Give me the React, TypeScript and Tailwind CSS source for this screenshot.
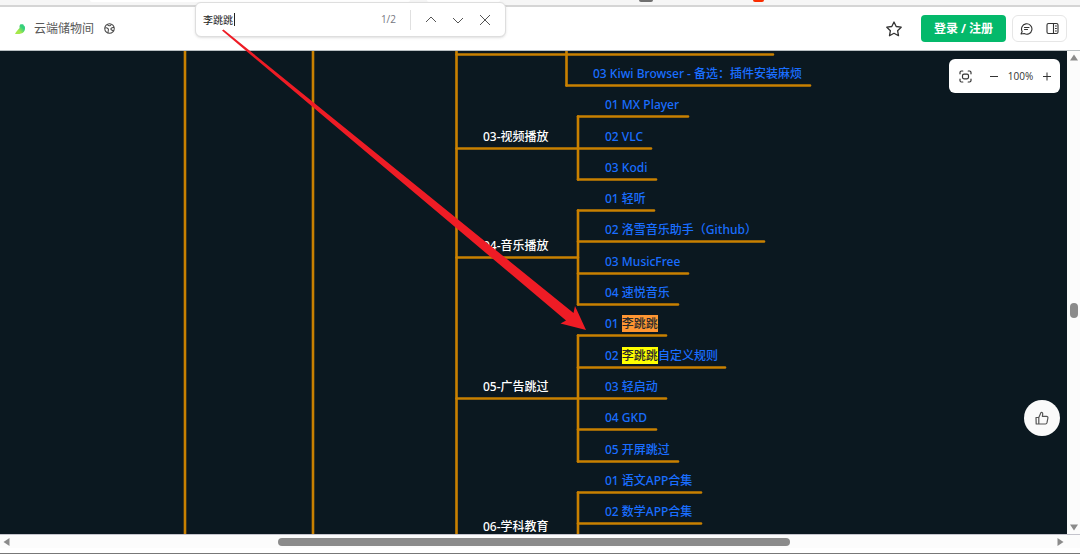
import { useState } from "react";

type Leaf = { x: number; row: number; end: number; text: string; hit?: string; hitClass?: string };
type Branch = { y: number; text: string };

const ROWS = [34, 65, 97, 128, 159, 190, 222, 253, 284, 316, 347, 378, 410, 441, 472];

const leaves: Leaf[] = [
  { x: 593, row: 0, end: 811, text: "03 Kiwi Browser - 备选：插件安装麻烦" },
  { x: 605, row: 1, end: 689, text: "01 MX Player" },
  { x: 605, row: 2, end: 652, text: "02 VLC" },
  { x: 605, row: 3, end: 657, text: "03 Kodi" },
  { x: 605, row: 4, end: 655, text: "01 轻听" },
  { x: 605, row: 5, end: 765, text: "02 洛雪音乐助手（Github）" },
  { x: 605, row: 6, end: 689, text: "03 MusicFree" },
  { x: 605, row: 7, end: 679, text: "04 速悦音乐" },
  { x: 605, row: 8, end: 667, text: "01 ", hit: "李跳跳", hitClass: "bg-[#ff9632]" },
  { x: 605, row: 9, end: 726, text: "02 |自定义规则", hit: "李跳跳", hitClass: "bg-[#ffff00]" },
  { x: 605, row: 10, end: 667, text: "03 轻启动" },
  { x: 605, row: 11, end: 657, text: "04 GKD" },
  { x: 605, row: 12, end: 679, text: "05 开屏跳过" },
  { x: 605, row: 13, end: 702, text: "01 语文APP合集" },
  { x: 605, row: 14, end: 702, text: "02 数学APP合集" },
];

const branches: Branch[] = [
  { y: 97, text: "03-视频播放" },
  { y: 206, text: "04-音乐播放" },
  { y: 347, text: "05-广告跳过" },
  { y: 487, text: "06-学科教育" },
];

const nodeText =
  "absolute -translate-y-full whitespace-pre pb-[2px] text-[12px] font-medium leading-[18px]";

function MindMap() {
  return (
    <div className="absolute inset-0 overflow-hidden bg-[#0b1820] font-['Noto_Sans','Noto_Sans_CJK_SC',sans-serif]">
      <svg className="absolute left-0 top-0 h-full w-full" fill="none" stroke="#c98000" strokeWidth="2.6" strokeLinecap="round" aria-hidden="true">
        <path d="M185 -4V600M313 -4V600M456.500 -4V600" />
        <path d="M456.500 3.500H773M566.500 -4V34.500" />
        <path d="M456.500 97.500H578M456.500 206.500H578M456.500 347.500H578M456.500 487.500H578" />
        <path d="M578 65.500V128.500M578 159.500V253.500M578 284.500V410.500M578 441.500V600" />
        {leaves.map((l) => (
          <path key={l.row} d={`M${l.row === 0 ? 566.5 : 578} ${ROWS[l.row] + 0.5}H${l.end - 1}`} />
        ))}
      </svg>
      {branches.map((b) => (
        <span key={b.text} className={`${nodeText} text-white`} style={{ left: 483, top: b.y }}>
          {b.text}
        </span>
      ))}
      {leaves.map((l) => {
        const [before, after] = l.text.split("|");
        return (
          <a key={l.row} href="#" className={`${nodeText} text-[#1a6eff]`} style={{ left: l.x, top: ROWS[l.row] }}>
            {before}
            {l.hit && <mark className={`text-[#2a2a2a] ${l.hitClass}`}>{l.hit}</mark>}
            {after}
          </a>
        );
      })}
    </div>
  );
}

function FindBar() {
  const [query, setQuery] = useState("李跳跳");
  return (
    <div className="absolute left-[195px] top-[2px] flex h-[35px] w-[311px] items-center rounded-md border border-[#dedede] bg-white pl-[7px] pr-3 text-[#555] shadow-sm">
      <div className="flex min-w-0 flex-1 items-center">
        <input
          aria-label="查找"
          value={query}
          onChange={(e) => setQuery(e.target.value)}
          className="w-[31px] bg-transparent text-[10px] leading-4 text-[#222] outline-none"
        />
        <span className="h-[13px] w-px bg-[#222]" />
      </div>
      <span className="text-[10px] text-[#76767f]">1/2</span>
      <span className="ml-[14px] mr-3 h-5 w-px bg-[#e0e0e0]" />
      <div className="flex items-center gap-[11px]">
        <button aria-label="上一个" className="p-[2px]">
          <svg width="12" height="12" viewBox="0 0 12 12" fill="none" stroke="currentColor"><path d="M1 8L6 3L11 8" /></svg>
        </button>
        <button aria-label="下一个" className="p-[2px]">
          <svg width="12" height="12" viewBox="0 0 12 12" fill="none" stroke="currentColor"><path d="M1 4L6 9L11 4" /></svg>
        </button>
        <button aria-label="关闭" className="p-[2px]">
          <svg width="12" height="12" viewBox="0 0 12 12" fill="none" stroke="currentColor"><path d="M1 1L11 11M11 1L1 11" /></svg>
        </button>
      </div>
    </div>
  );
}

function Header() {
  return (
    <header className="flex h-11 shrink-0 items-center border-b border-[#b9bfc2] bg-white pl-[14px] pr-[13px] text-[#333]">
      <svg width="12" height="12" viewBox="0 0 12 12" aria-hidden="true">
        <defs>
          <linearGradient id="leaf" x1="0" y1="1" x2="1" y2="0">
            <stop offset="0.35" stopColor="#a5e84b" />
            <stop offset="0.7" stopColor="#35d07c" />
          </linearGradient>
        </defs>
        <path d="M6.500 1.200L9.200 1.300C9.400 2.200 10 2.900 10.700 3.300C11.400 5.200 11 7.400 9.700 9C8 11 4.500 11.300 1 10.900C2.200 8.600 4 6.800 5.600 5C5.200 3.600 5.600 2.200 6.500 1.200Z" fill="url(#leaf)" />
      </svg>
      <h1 className="ml-2 text-[12px] leading-[18px] text-[#585858]">云端储物间</h1>
      <svg className="ml-[10px]" width="11" height="11" viewBox="0 0 12 12" fill="none" stroke="#444" strokeWidth="1.1" aria-hidden="true">
        <circle cx="6" cy="6" r="5.200" />
        <path d="M1 5.600C2.600 4.800 4.200 5.400 4.800 6.800C5 8 4.200 9 4.400 10.900M3.400 1.700C4.500 2.300 5.200 3.200 6.600 3.100C7.500 2.800 7.800 2 8 1.300M11 5C9.600 4.600 7.600 5.200 7.400 6.600C7.500 7.800 8.800 7.600 10.400 8.600" />
      </svg>
      <div className="ml-auto flex items-center">
        <button aria-label="收藏" className="mr-[19px]">
          <svg width="16" height="16" viewBox="0 0 16 16" fill="none" stroke="#333" strokeWidth="1.300" strokeLinejoin="round">
            <path d="M8 1L10.200 5.500L15.200 6.200L11.600 9.700L12.500 14.700L8 12.300L3.500 14.700L4.400 9.700L.8 6.200L5.800 5.500Z" />
          </svg>
        </button>
        <button className="h-[27px] w-[85px] rounded bg-[#04b96b] text-[12px] font-bold text-white">登录 / 注册</button>
        <div className="ml-[6px] flex h-[27px] w-[55px] items-center justify-between rounded-md border border-[#e6e6e6] px-[7px]">
          <button aria-label="评论">
            <svg width="13" height="13" viewBox="0 0 13 13" fill="none" stroke="#333" strokeWidth="1.100" strokeLinecap="round" strokeLinejoin="round">
              <path d="M1 12L2.200 9.500A5.200 5.200 0 1 1 4.200 11.500Z" />
              <path d="M4.500 5.500H9M4.500 7.500H7.500" />
            </svg>
          </button>
          <button aria-label="目录">
            <svg width="13" height="13" viewBox="0 0 13 13" fill="none" stroke="#333" strokeWidth="1.100">
              <rect x="1" y="1.500" width="11" height="10" rx="1.500" />
              <path d="M7.500 1.500V11.500M9 4H10.800M9 6.500H10.800M9 9H10.800" />
            </svg>
          </button>
        </div>
      </div>
    </header>
  );
}

function ZoomPanel() {
  return (
    <div className="absolute right-[7px] top-2 flex h-[34px] w-[111px] items-center rounded-md bg-white pl-[10px] pr-2 text-[#333]">
      <button aria-label="适应画布">
        <svg width="13" height="13" viewBox="0 0 13 13" fill="none" stroke="currentColor" strokeWidth="1.200" strokeLinecap="round">
          <path d="M1 3.800V2.500Q1 1 2.500 1H3.800M9.200 1H10.500Q12 1 12 2.500V3.800M12 9.200V10.500Q12 12 10.500 12H9.200M3.800 12H2.500Q1 12 1 10.500V9.200" />
          <rect x="3.500" y="4.200" width="6" height="4.600" rx="1.500" />
        </svg>
      </button>
      <button aria-label="缩小" className="ml-[17px]">
        <svg width="10" height="10" viewBox="0 0 10 10" stroke="currentColor"><path d="M1 5.500H9" /></svg>
      </button>
      <span className="flex-1 text-center text-[10px]">100%</span>
      <button aria-label="放大">
        <svg width="10" height="10" viewBox="0 0 10 10" stroke="currentColor"><path d="M1 5.500H9M5 1.500V9.500" /></svg>
      </button>
    </div>
  );
}

function VerticalScroll() {
  return (
    <div className="flex w-[13px] shrink-0 flex-col items-center bg-[#fcfcfc] py-[3px]" aria-hidden="true">
      <svg width="8" height="7" viewBox="0 0 8 7" fill="#8b8b8b"><path d="M4 .5L8 6.500H0Z" /></svg>
      <div className="grow-[242]" />
      <div className="h-[15px] w-2 rounded-full bg-[#8b8b8b]" />
      <div className="grow-[206]" />
      <svg width="8" height="7" viewBox="0 0 8 7" fill="#8b8b8b"><path d="M0 .5H8L4 6.500Z" /></svg>
    </div>
  );
}

function HorizontalScroll() {
  return (
    <div className="flex h-[14px] shrink-0 items-center border-t border-[#c4c4cc] bg-[#fcfcfc] pl-[3px] pr-4" aria-hidden="true">
      <svg width="7" height="8" viewBox="0 0 7 8" fill="#8b8b8b"><path d="M.5 4L6.500 0V8Z" /></svg>
      <div className="shrink basis-[268px] grow-[268]" />
      <div className="h-2 shrink basis-[512px] grow-[512] rounded-full bg-[#8b8b8b]" />
      <div className="shrink basis-[267px] grow-[267]" />
      <svg width="7" height="8" viewBox="0 0 7 8" fill="#8b8b8b"><path d="M.5 0L6.500 4L.5 8Z" /></svg>
    </div>
  );
}

export default function App() {
  return (
    <div className="relative flex h-screen flex-col overflow-hidden bg-white font-['Open_Sans','Noto_Sans_CJK_SC',sans-serif]">
      <div className="relative h-[7px] shrink-0 border-b-2 border-[#d5d5d5] bg-[#f6f6f6]">
        <span className="absolute left-[90px] top-0 h-[2px] w-[320px] rounded-b bg-white" />
        <span className="absolute left-[427px] top-0 h-[2px] w-[73px] rounded-b bg-white" />
        <span className="absolute left-[639px] top-0 h-[2px] w-[14px] rounded-b bg-[#707070]" />
        <span className="absolute left-[753px] top-0 h-[2px] w-[11px] rounded-b bg-[#fa2c00]" />
      </div>
      <Header />
      <div className="flex min-h-0 flex-1">
        <main className="relative flex-1">
          <MindMap />
          <ZoomPanel />
          <button aria-label="点赞" className="absolute bottom-[98px] right-[7px] flex size-9 items-center justify-center rounded-full bg-[#fafafa]">
            <svg width="14" height="14" viewBox="0 0 14 14" fill="none" stroke="#555" strokeWidth="1.200" strokeLinejoin="round">
              <path d="M1 6.500H3.800L6 1.500Q7.800 1 7.700 3L7.400 5.400H11.500Q13.200 5.500 12.900 7L12 11.700Q11.700 13 10.500 13H1.200ZM3.800 6.500V13" />
            </svg>
          </button>
        </main>
        <VerticalScroll />
      </div>
      <HorizontalScroll />
      <div className="h-[6px] shrink-0 border-b border-[#777]" />
      <FindBar />
      <svg className="pointer-events-none absolute left-0 top-0" width="600" height="340" viewBox="0 0 600 340" aria-hidden="true">
        <path d="M222 30.500L223.500 29.500L573.500 313L575 306L586 330L560.500 323.500L566 320.500Z" fill="#ee1c25" />
      </svg>
    </div>
  );
}
